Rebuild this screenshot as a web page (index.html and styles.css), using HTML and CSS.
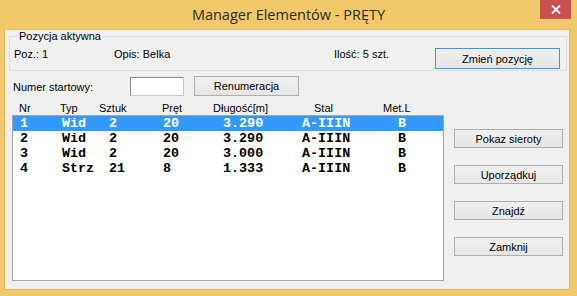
FILE: index.html
```html
<!DOCTYPE html>
<html lang="pl">
<head>
<meta charset="utf-8">
<title>Manager Elementów - PRĘTY</title>
<link rel="stylesheet" href="styles.css">
</head>
<body>
<div class="window">
  <div class="titlebar">
    <div class="spacer"></div>
    <div class="title">Manager Elementów - PRĘTY</div>
    <div class="tb-right">
      <button class="close" type="button" aria-label="Zamknij">
        <svg width="10" height="9" viewBox="0 0 10 9"><path d="M1 0.5 L9 8.5 M9 0.5 L1 8.5" stroke="#fff" stroke-width="1.8" fill="none"/></svg>
      </button>
    </div>
  </div>
  <div class="client">
    <fieldset class="group">
      <legend>Pozycja aktywna</legend>
      <div class="group-row">
        <span class="poz">Poz.: 1</span>
        <span class="opis">Opis: Belka</span>
        <span class="ilosc">Ilość: 5 szt.</span>
        <button class="btn focus btn-zmien" type="button">Zmień pozycję</button>
      </div>
    </fieldset>
    <div class="start-row">
      <span class="start-label">Numer startowy:</span>
      <input class="start-input" type="text">
      <button class="btn btn-renum" type="button">Renumeracja</button>
    </div>
    <div class="main">
      <div class="left">
        <div class="head">
          <span>Nr</span><span>Typ</span><span>Sztuk</span><span>Pręt</span><span>Długość[m]</span><span>Stal</span><span>Met.L</span>
        </div>
        <div class="list">
          <div class="row sel"><span>1</span><span>Wid</span><span>2</span><span>20</span><span>3.290</span><span>A-IIIN</span><span>B</span></div>
          <div class="row"><span>2</span><span>Wid</span><span>2</span><span>20</span><span>3.290</span><span>A-IIIN</span><span>B</span></div>
          <div class="row"><span>3</span><span>Wid</span><span>2</span><span>20</span><span>3.000</span><span>A-IIIN</span><span>B</span></div>
          <div class="row"><span>4</span><span>Strz</span><span>21</span><span>8</span><span>1.333</span><span>A-IIIN</span><span>B</span></div>
        </div>
      </div>
      <div class="side">
        <button class="btn side-btn" type="button">Pokaz sieroty</button>
        <button class="btn side-btn" type="button">Uporządkuj</button>
        <button class="btn side-btn" type="button">Znajdź</button>
        <button class="btn side-btn" type="button">Zamknij</button>
      </div>
    </div>
  </div>
</div>
</body>
</html>
```

FILE: styles.css
```css
* { box-sizing: border-box; }
html, body { margin: 0; padding: 0; }
body {
  width: 577px;
  height: 296px;
  background: #f1c96a;
  font-family: "Liberation Sans", Arial, sans-serif;
  font-size: 11px;
  color: #000;
  overflow: hidden;
}
.window { width: 577px; height: 296px; }
.titlebar {
  height: 29px;
  display: grid;
  grid-template-columns: 1fr auto 1fr;
  align-items: start;
}
.title {
  font-family: "Open Sans", "Noto Sans", sans-serif;
  font-size: 14.5px;
  line-height: 29px;
  color: #2a2a2a;
}
.tb-right { display: flex; justify-content: flex-end; padding-right: 6px; }
.close {
  width: 31px;
  height: 19px;
  border: 0;
  padding: 0;
  margin: 0;
  background: #c75050;
  display: flex;
  align-items: center;
  justify-content: center;
}
.client {
  margin: 0 7px 0 4px;
  height: 261px;
  background: #f0f0f0;
  border: 1px solid #dcb55a;
  border-top-color: #e6be63;
}
.group {
  margin: 0 2px 0 4px;
  padding: 0 6px 1px 4px;
  border: 1px solid #dcdcdc;
  min-width: 0;
}
.group legend {
  margin-left: 3px;
  padding: 0 2px;
  line-height: 12px;
  font-size: 11px;
}
.group-row {
  display: flex;
  align-items: flex-start;
  margin-top: 6px;
  line-height: 13px;
}
.poz { width: 100px; }
.opis { width: 220px; }
.ilosc { flex: 1; }
.btn {
  font-family: "Liberation Sans", Arial, sans-serif;
  font-size: 11px;
  color: #000;
  border: 1px solid #adadad;
  background: linear-gradient(#f0f0f0, #e5e5e5);
  padding: 0;
  margin: 0;
  line-height: 16px;
}
.btn.focus { border-color: #3399ff; }
.btn-zmien { width: 125px; height: 21px; }
.start-row {
  display: flex;
  align-items: flex-start;
  margin-top: 5px;
  padding-left: 8px;
}
.start-label { width: 117px; line-height: 13px; margin-top: 5px; }
.start-input {
  width: 54px;
  height: 19px;
  margin: 1px 0 0 0;
  border: 1px solid #7a7a7a;
  border-color: #8a8a8a #c9c9c9 #c9c9c9 #8a8a8a;
  background: #fff;
  padding: 0;
}
.btn-renum { width: 105px; height: 20px; margin-left: 10px; }
.main {
  display: flex;
  align-items: flex-start;
  margin-top: 5px;
}
.left { margin-left: 7px; width: 432px; }
.head {
  display: grid;
  grid-template-columns: 41px 39px 63px 51px 101px 69px 1fr;
  padding-left: 7px;
  height: 14px;
  line-height: 15px;
  white-space: nowrap;
}
.list {
  height: 166px;
  background: #fff;
  border: 1px solid #a5a5a5;
}
.row {
  display: grid;
  grid-template-columns: 42px 47px 54px 60px 79px 96px 1fr;
  padding-left: 7px;
  height: 15px;
  line-height: 15px;
  font-family: "Liberation Mono", "DejaVu Sans Mono", monospace;
  font-weight: bold;
  font-size: 13.4px;
  white-space: pre;
}
.row.sel { background: #3399ff; color: #fff; }
.side {
  display: flex;
  flex-direction: column;
  gap: 17px;
  margin-left: 10px;
  padding-top: 28px;
}
.side-btn { width: 109px; height: 19px; }
```
